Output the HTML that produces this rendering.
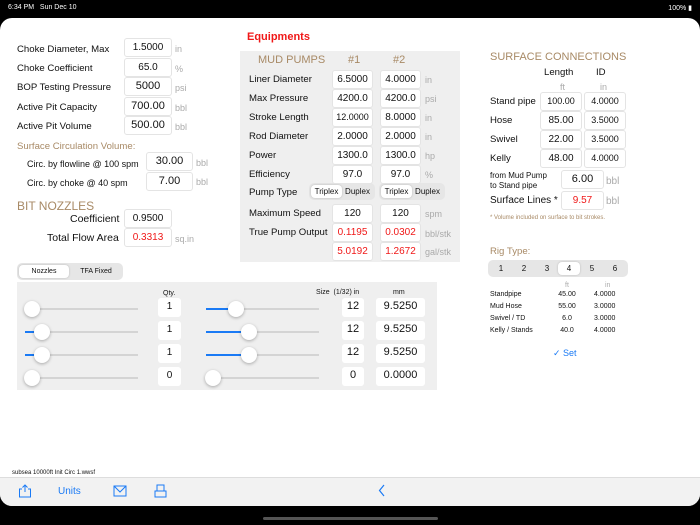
<!DOCTYPE html>
<html><head><meta charset="utf-8">
<style>
*{margin:0;padding:0;box-sizing:border-box}
body{width:700px;height:525px;background:#000;position:relative;overflow:hidden;font-family:"Liberation Sans",sans-serif;color:#111}
.a{position:absolute;white-space:nowrap}
.card{position:absolute;left:0;top:18px;width:700px;height:488px;background:#fff;border-radius:12px;overflow:hidden}
.l{position:absolute;font-size:9.6px;white-space:nowrap;line-height:12px;margin-top:2px}
.b{position:absolute;background:#fff;border:1px solid #e4e4e4;border-radius:3px;height:19px;text-align:center;font-size:10px;line-height:17px}
.u{position:absolute;font-size:9px;color:#aaa;line-height:12px;margin-top:1px}
.t{color:#a88a66}
.r{color:#f01818}
.seg{position:absolute;background:#e6e6e6;border-radius:5px;height:17px;font-size:8px}
.seg span{position:absolute;top:2px;height:13px;line-height:13px;text-align:center}
.seg .on{background:#fff;border-radius:4px;box-shadow:0 0 2px rgba(0,0,0,.2)}
.tr{position:absolute;height:2px;background:#d4d4d4}
.bl{position:absolute;height:2px;background:#1a7af5}
.k{position:absolute;width:16px;height:16px;border-radius:50%;background:#fff;box-shadow:0 1px 3px rgba(0,0,0,.3)}
</style></head><body>
<div class="a" style="left:8px;top:4px;color:#fff;font-size:7px">6:34 PM &nbsp;&nbsp;Sun Dec 10</div>
<div class="a" style="right:8px;top:4px;color:#fff;font-size:7px">100% ▮</div>
<div class="card"></div>

<!-- left column -->
<div class="l" style="left:17px;top:42px">Choke Diameter, Max</div><div class="b" style="left:124px;top:38px;width:48px">1.5000</div><div class="u" style="left:175px;top:42px">in</div>
<div class="l" style="left:17px;top:61px">Choke Coefficient</div><div class="b" style="left:124px;top:58px;width:48px">65.0</div><div class="u" style="left:175px;top:62px">%</div>
<div class="l" style="left:17px;top:80px">BOP Testing Pressure</div><div class="b" style="left:124px;top:77px;width:48px;font-size:11px">5000</div><div class="u" style="left:175px;top:81px">psi</div>
<div class="l" style="left:17px;top:100px">Active Pit Capacity</div><div class="b" style="left:124px;top:97px;width:48px;font-size:11px">700.00</div><div class="u" style="left:175px;top:101px">bbl</div>
<div class="l" style="left:17px;top:119px">Active Pit Volume</div><div class="b" style="left:124px;top:116px;width:48px;font-size:11px">500.00</div><div class="u" style="left:175px;top:120px">bbl</div>
<div class="l t" style="left:17px;top:139px">Surface Circulation Volume:</div>
<div class="l" style="left:27px;top:156px;font-size:9px">Circ. by flowline @ 100 spm</div><div class="b" style="left:146px;top:152px;width:47px;font-size:11px">30.00</div><div class="u" style="left:196px;top:156px">bbl</div>
<div class="l" style="left:27px;top:175px;font-size:9px">Circ. by choke @ 40 spm</div><div class="b" style="left:146px;top:172px;width:47px;font-size:11px">7.00</div><div class="u" style="left:196px;top:175px">bbl</div>
<div class="l t" style="left:17px;top:197px;font-size:12px;line-height:14px">BIT NOZZLES</div>
<div class="l" style="left:70px;top:211px;font-size:10.5px">Coefficient</div><div class="b" style="left:124px;top:209px;width:48px">0.9500</div>
<div class="l" style="left:47px;top:230px;font-size:10.5px">Total Flow Area</div><div class="b r" style="left:124px;top:228px;width:48px">0.3313</div><div class="u" style="left:175px;top:232px">sq.in</div>

<!-- equipments -->
<div class="l r" style="left:247px;top:29px;font-size:11px;font-weight:bold">Equipments</div>
<div class="a" style="left:240px;top:51px;width:220px;height:211px;background:#efefef"></div>
<div class="l t" style="left:258px;top:52px;font-size:11px">MUD PUMPS</div>
<div class="l t" style="left:348px;top:52px;font-size:11px">#1</div>
<div class="l t" style="left:393px;top:52px;font-size:11px">#2</div>
<div class="l" style="left:249px;top:72px">Liner Diameter</div><div class="b" style="left:332px;top:70px;width:41px">6.5000</div><div class="b" style="left:380px;top:70px;width:41px">4.0000</div><div class="u" style="left:425px;top:73px">in</div>
<div class="l" style="left:249px;top:91px">Max Pressure</div><div class="b" style="left:332px;top:89px;width:41px">4200.0</div><div class="b" style="left:380px;top:89px;width:41px">4200.0</div><div class="u" style="left:425px;top:92px">psi</div>
<div class="l" style="left:249px;top:110px">Stroke Length</div><div class="b" style="left:332px;top:108px;width:41px;font-size:9px">12.0000</div><div class="b" style="left:380px;top:108px;width:41px">8.0000</div><div class="u" style="left:425px;top:111px">in</div>
<div class="l" style="left:249px;top:129px">Rod Diameter</div><div class="b" style="left:332px;top:127px;width:41px">2.0000</div><div class="b" style="left:380px;top:127px;width:41px">2.0000</div><div class="u" style="left:425px;top:130px">in</div>
<div class="l" style="left:249px;top:148px">Power</div><div class="b" style="left:332px;top:146px;width:41px">1300.0</div><div class="b" style="left:380px;top:146px;width:41px">1300.0</div><div class="u" style="left:425px;top:149px">hp</div>
<div class="l" style="left:249px;top:167px">Efficiency</div><div class="b" style="left:332px;top:165px;width:41px">97.0</div><div class="b" style="left:380px;top:165px;width:41px">97.0</div><div class="u" style="left:425px;top:168px">%</div>
<div class="l" style="left:249px;top:185px">Pump Type</div>
<div class="seg" style="left:309px;top:183px;width:66px"><span class="on" style="left:2px;width:31px">Triplex</span><span style="left:33px;width:31px">Duplex</span></div>
<div class="seg" style="left:379px;top:183px;width:66px"><span class="on" style="left:2px;width:31px">Triplex</span><span style="left:33px;width:31px">Duplex</span></div>
<div class="l" style="left:249px;top:206px">Maximum Speed</div><div class="b" style="left:332px;top:204px;width:41px">120</div><div class="b" style="left:380px;top:204px;width:41px">120</div><div class="u" style="left:425px;top:207px">spm</div>
<div class="l" style="left:249px;top:225px">True Pump Output</div><div class="b r" style="left:332px;top:223px;width:41px">0.1195</div><div class="b r" style="left:380px;top:223px;width:41px">0.0302</div><div class="u" style="left:425px;top:227px">bbl/stk</div>
<div class="b r" style="left:332px;top:242px;width:41px">5.0192</div><div class="b r" style="left:380px;top:242px;width:41px">1.2672</div><div class="u" style="left:425px;top:245px">gal/stk</div>

<!-- surface connections -->
<div class="l t" style="left:490px;top:49px;font-size:11px">SURFACE CONNECTIONS</div>
<div class="l" style="left:544px;top:65px">Length</div><div class="l" style="left:596px;top:65px">ID</div>
<div class="u" style="left:560px;top:80px">ft</div><div class="u" style="left:600px;top:80px">in</div>
<div class="l" style="left:490px;top:94px">Stand pipe</div><div class="b" style="left:540px;top:92px;width:42px;font-size:9px">100.00</div><div class="b" style="left:584px;top:92px;width:42px;font-size:9px">4.0000</div>
<div class="l" style="left:490px;top:113px">Hose</div><div class="b" style="left:540px;top:111px;width:42px">85.00</div><div class="b" style="left:584px;top:111px;width:42px;font-size:9px">3.5000</div>
<div class="l" style="left:490px;top:132px">Swivel</div><div class="b" style="left:540px;top:130px;width:42px">22.00</div><div class="b" style="left:584px;top:130px;width:42px;font-size:9px">3.5000</div>
<div class="l" style="left:490px;top:151px">Kelly</div><div class="b" style="left:540px;top:149px;width:42px">48.00</div><div class="b" style="left:584px;top:149px;width:42px;font-size:9px">4.0000</div>
<div class="l" style="left:490px;top:169px;font-size:8px;line-height:10px">from Mud Pump<br>to Stand pipe</div><div class="b" style="left:561px;top:170px;width:43px;font-size:11px">6.00</div><div class="u" style="left:606px;top:175px;font-size:10px">bbl</div>
<div class="l" style="left:490px;top:193px;font-size:10px">Surface Lines *</div><div class="b r" style="left:561px;top:191px;width:43px">9.57</div><div class="u" style="left:606px;top:195px;font-size:10px">bbl</div>
<div class="l t" style="left:490px;top:212px;font-size:6px;line-height:8px">* Volume included on surface to bit strokes.</div>
<div class="l t" style="left:490px;top:244px">Rig Type:</div>
<div class="seg" style="left:488px;top:260px;width:140px;font-size:8px">
<span style="left:2px;width:22px">1</span><span style="left:25px;width:22px">2</span><span style="left:48px;width:22px">3</span><span class="on" style="left:70px;width:22px">4</span><span style="left:93px;width:22px">5</span><span style="left:116px;width:22px">6</span></div>
<div class="u" style="left:565px;top:279px;font-size:7px">ft</div><div class="u" style="left:605px;top:279px;font-size:7px">in</div>
<div class="l" style="left:490px;top:287px;font-size:7px;line-height:12px">Standpipe<br>Mud Hose<br>Swivel / TD<br>Kelly / Stands</div>
<div class="l" style="left:556px;top:287px;font-size:7px;line-height:12px;text-align:center;width:22px">45.00<br>55.00<br>6.0<br>40.0</div>
<div class="l" style="left:594px;top:287px;font-size:7px;line-height:12px">4.0000<br>3.0000<br>3.0000<br>4.0000</div>
<div class="l" style="left:553px;top:345px;color:#1a7af5;font-size:9px">✓ Set</div>

<!-- nozzles -->
<div class="seg" style="left:17px;top:263px;width:106px;font-size:7px"><span class="on" style="left:2px;width:50px">Nozzles</span><span style="left:54px;width:50px">TFA Fixed</span></div>
<div class="a" style="left:17px;top:282px;width:420px;height:108px;background:#efefef"></div>
<div class="l" style="left:163px;top:286px;font-size:7px">Qty.</div>
<div class="l" style="left:316px;top:285px;font-size:7px">Size &nbsp;(1/32) in</div>
<div class="l" style="left:393px;top:285px;font-size:7px">mm</div>

<div class="tr" style="left:25px;top:308px;width:113px"></div><div class="k" style="left:24px;top:301px"></div>
<div class="tr" style="left:25px;top:331px;width:113px"></div><div class="bl" style="left:25px;top:331px;width:12px"></div><div class="k" style="left:34px;top:324px"></div>
<div class="tr" style="left:25px;top:354px;width:113px"></div><div class="bl" style="left:25px;top:354px;width:12px"></div><div class="k" style="left:34px;top:347px"></div>
<div class="tr" style="left:25px;top:377px;width:113px"></div><div class="k" style="left:24px;top:370px"></div>

<div class="b" style="left:158px;top:298px;width:23px;font-size:10px;border:none">1</div>
<div class="b" style="left:158px;top:321px;width:23px;font-size:10px;border:none">1</div>
<div class="b" style="left:158px;top:344px;width:23px;font-size:10px;border:none">1</div>
<div class="b" style="left:158px;top:367px;width:23px;font-size:10px;border:none">0</div>

<div class="tr" style="left:206px;top:308px;width:113px"></div><div class="bl" style="left:206px;top:308px;width:28px"></div><div class="k" style="left:228px;top:301px"></div>
<div class="tr" style="left:206px;top:331px;width:113px"></div><div class="bl" style="left:206px;top:331px;width:40px"></div><div class="k" style="left:241px;top:324px"></div>
<div class="tr" style="left:206px;top:354px;width:113px"></div><div class="bl" style="left:206px;top:354px;width:40px"></div><div class="k" style="left:241px;top:347px"></div>
<div class="tr" style="left:206px;top:377px;width:113px"></div><div class="k" style="left:205px;top:370px"></div>

<div class="b" style="left:342px;top:298px;width:22px;font-size:11px;border:none">12</div><div class="b" style="left:376px;top:298px;width:49px;font-size:11px;border:none">9.5250</div>
<div class="b" style="left:342px;top:321px;width:22px;font-size:11px;border:none">12</div><div class="b" style="left:376px;top:321px;width:49px;font-size:11px;border:none">9.5250</div>
<div class="b" style="left:342px;top:344px;width:22px;font-size:11px;border:none">12</div><div class="b" style="left:376px;top:344px;width:49px;font-size:11px;border:none">9.5250</div>
<div class="b" style="left:342px;top:367px;width:22px;font-size:11px;border:none">0</div><div class="b" style="left:376px;top:367px;width:49px;font-size:11px;border:none">0.0000</div>

<!-- footer -->
<div class="l" style="left:12px;top:467px;font-size:6px;line-height:8px">subsea 10000ft Init Circ 1.wwsf</div>
<div class="a" style="left:0;top:477px;width:700px;height:29px;background:#f2f2f2;border-top:1px solid #ddd;border-radius:0 0 12px 12px"></div>
<svg class="a" style="left:18px;top:484px" width="14" height="14" viewBox="0 0 14 14" fill="none" stroke="#1a7af5" stroke-width="1"><path d="M4 5H1.5V13H12.5V5H10M7 1V8M4.5 3.5L7 1L9.5 3.5"/></svg>
<div class="l" style="left:58px;top:484px;font-size:10px;color:#1a7af5">Units</div>
<svg class="a" style="left:113px;top:485px" width="14" height="12" viewBox="0 0 14 12" fill="none" stroke="#1a7af5" stroke-width="1"><rect x="1" y="1" width="12" height="10"/><path d="M1 1L7 7L13 1"/></svg>
<svg class="a" style="left:154px;top:484px" width="13" height="14" viewBox="0 0 13 14" fill="none" stroke="#1a7af5" stroke-width="1"><rect x="3" y="1" width="7" height="6"/><rect x="1" y="7" width="11" height="6"/></svg>
<svg class="a" style="left:378px;top:484px" width="8" height="13" viewBox="0 0 8 13" fill="none" stroke="#1a7af5" stroke-width="1.2"><path d="M6 1L1.5 6.5L6 12"/></svg>
<div class="a" style="left:263px;top:517px;width:175px;height:3px;border-radius:2px;background:#555"></div>
</body></html>
